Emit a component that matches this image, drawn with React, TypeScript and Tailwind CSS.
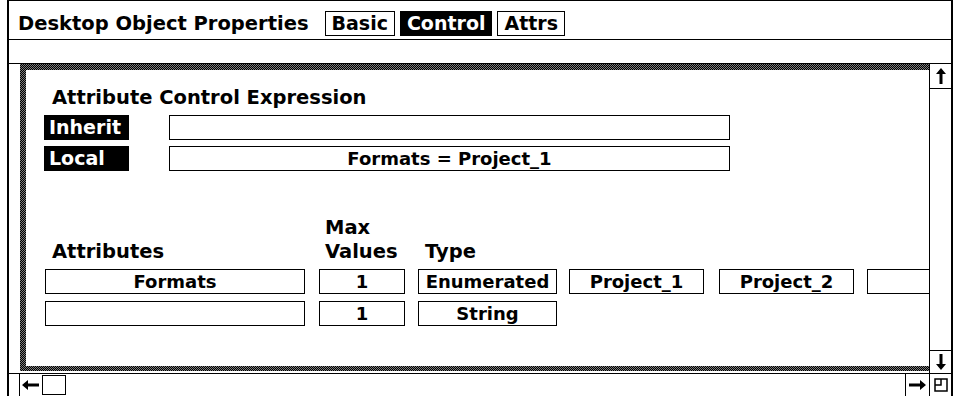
const FONT = "font-['DejaVu_Sans',sans-serif] font-bold";

function Field({ w, text, className = '' }: { w: string; text?: string; className?: string }) {
  return (
    <div
      className={`${w} h-[25px] border border-black bg-white flex items-center justify-center text-[18px] leading-none whitespace-nowrap shrink-0 ${className}`}
    >
      {text}
    </div>
  );
}

function BlackLabel({ text }: { text: string }) {
  return (
    <div className="w-[85px] h-[25px] bg-black text-white text-[19px] leading-none flex items-center pl-[5px] shrink-0">
      {text}
    </div>
  );
}

function Stipple({ className = '' }: { className?: string }) {
  return (
    <div
      className={`bg-[repeating-conic-gradient(#000_0%_25%,#7a7a7a_0%_50%)] bg-size-[2px_2px] shrink-0 ${className}`}
    />
  );
}

export default function App() {
  return (
    <div className={`w-[956px] h-[396px] bg-white overflow-hidden text-black ${FONT}`}>
      <div className="ml-[7px] w-[946px] h-[396px] border-x-2 border-black flex flex-col">
        {/* title row */}
        <div className="h-[40px] border-y border-black flex items-baseline pl-[9px] pt-[10px] shrink-0">
          <span className="text-[19.5px] leading-[24px] mr-[16px]">Desktop Object Properties</span>
          <span className="border border-black px-[6px] text-[19px] leading-[23px] mr-[5px]">Basic</span>
          <span className="border border-black bg-black text-white px-[6px] text-[19px] leading-[23px] mr-[5px]">
            Control
          </span>
          <span className="border border-black px-[6px] text-[19px] leading-[23px]">Attrs</span>
        </div>
        {/* message row */}
        <div className="h-[24px] border-b border-black shrink-0" />

        {/* main pane */}
        <div className="flex h-[309px] shrink-0">
          <div className="flex-1 min-w-0 pl-[11px] flex flex-col">
            <Stipple className="h-[6px]" />
            <div className="flex-1 min-h-0 flex">
              <Stipple className="w-[6px]" />
              <div className="flex-1 min-w-0 overflow-hidden pt-[16px]">
                <div className="pl-[26px] text-[19.5px] leading-[24px]">Attribute Control Expression</div>
                <div className="flex gap-[40px] pl-[18px] mt-[5px]">
                  <BlackLabel text="Inherit" />
                  <Field w="w-[561px]" />
                </div>
                <div className="flex gap-[40px] pl-[18px] mt-[6px]">
                  <BlackLabel text="Local" />
                  <Field w="w-[561px]" text="Formats = Project_1" />
                </div>

                <div className="flex items-end pl-[26px] mt-[45px] text-[19.5px] leading-[24px]">
                  <div className="w-[273px]">Attributes</div>
                  <div className="w-[100px]">
                    <div>Max</div>
                    <div>Values</div>
                  </div>
                  <div>Type</div>
                </div>

                <div className="flex pl-[19px] mt-[5px]">
                  <Field w="w-[260px]" text="Formats" />
                  <Field w="w-[86px]" text="1" className="ml-[14px]" />
                  <Field w="w-[139px]" text="Enumerated" className="ml-[13px]" />
                  <Field w="w-[135px]" text="Project_1" className="ml-[12px]" />
                  <Field w="w-[135px]" text="Project_2" className="ml-[15px]" />
                  <Field w="w-[100px]" className="ml-[13px]" />
                </div>
                <div className="flex pl-[19px] mt-[7px]">
                  <Field w="w-[260px]" />
                  <Field w="w-[86px]" text="1" className="ml-[14px]" />
                  <Field w="w-[139px]" text="String" className="ml-[13px]" />
                </div>
              </div>
            </div>
            <Stipple className="h-[5px]" />
            <div className="h-[2px] shrink-0" />
          </div>

          {/* vertical scrollbar */}
          <div className="w-[22px] border-l border-black flex flex-col shrink-0">
            <div className="h-[25px] border-b border-black flex items-center justify-center">
              <svg width="10" height="16" viewBox="0 0 10 16">
                <path d="M5 0 L10 6 H6.5 V16 H3.5 V6 H0 Z" fill="#000" />
              </svg>
            </div>
            <div className="flex-1" />
            <div className="h-[23px] border-t border-black flex items-center justify-center">
              <svg width="10" height="16" viewBox="0 0 10 16">
                <path d="M5 16 L10 10 H6.5 V0 H3.5 V10 H0 Z" fill="#000" />
              </svg>
            </div>
          </div>
        </div>

        {/* horizontal scrollbar */}
        <div className="flex-1 border-t border-black flex pl-[10px]">
          <div className="flex-1 border-l border-black flex items-center pl-[2px] gap-[3px]">
            <svg width="17" height="10" viewBox="0 0 17 10">
              <path d="M0 5 L6 0 V3.5 H17 V6.5 H6 V10 Z" fill="#000" />
            </svg>
            <div className="w-[24px] h-[20px] border border-black" />
          </div>
          <div className="w-[24px] border-l border-black flex items-center justify-center">
            <svg width="17" height="10" viewBox="0 0 17 10">
              <path d="M17 5 L11 0 V3.5 H0 V6.5 H11 V10 Z" fill="#000" />
            </svg>
          </div>
          <div className="w-[22px] border-l border-black flex items-center justify-center">
            <svg width="14" height="14" viewBox="0 0 14 14">
              <rect x="1" y="1" width="12" height="12" fill="none" stroke="#000" strokeWidth="1.5" />
              <path d="M1 7 H7 V1" fill="none" stroke="#000" strokeWidth="1.5" />
            </svg>
          </div>
        </div>
      </div>
    </div>
  );
}
